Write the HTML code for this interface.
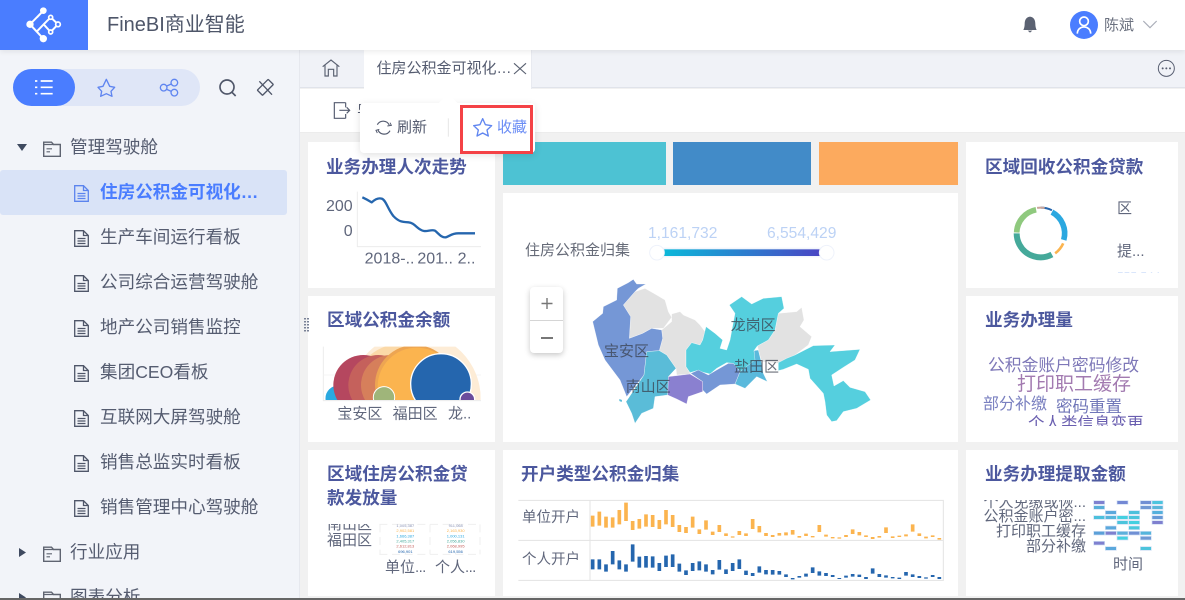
<!DOCTYPE html>
<html lang="zh"><head><meta charset="utf-8"><title>FineBI商业智能</title>
<style>
*{box-sizing:border-box}
html,body{margin:0;padding:0;width:1185px;height:600px;overflow:hidden;background:#f1f1f1;font-family:"Liberation Sans","Noto Sans CJK SC",sans-serif;color:#555c70}
#root{position:relative;width:1185px;height:600px;overflow:hidden;background:#f1f1f1}
.a{position:absolute}
.t{position:absolute;white-space:nowrap;line-height:1}
.card{position:absolute;background:#fff}
.h{position:absolute;white-space:nowrap;line-height:24px;font-size:17.6px;font-weight:700;color:#4c589e}
.n{font-size:17.6px;color:#555c70}
svg{position:absolute;overflow:visible}
.clip{position:absolute;overflow:hidden}
</style></head><body><div id="root">
<svg width="0" height="0" style="position:absolute"><defs>
<symbol id="doc" viewBox="0 0 15 17"><path d="M.7.7H9.5L14.3 5.5V16.3H.7ZM9.5.7V5.5H14.3M3.5 8.5H11.5M3.5 11H11.5M3.5 13.5H11.5" fill="none" stroke="#4f5669" stroke-width="1.3"/></symbol>
<symbol id="fold" viewBox="0 0 18 16"><path d="M.7 15.3V1.2H8.5L10.5 3.5H17.3V15.3Z" fill="none" stroke="#5f6471" stroke-width="1.4"/><path d="M.7 3.5H10.5M3.5 7.8H9M3.5 10.8H7" fill="none" stroke="#5f6471" stroke-width="1.2"/></symbol>
</defs></svg>

<!-- content background -->
<div class="a" style="left:300px;top:50px;width:885px;height:38px;background:#f0f2f7;border-bottom:1px solid #e0e3ea"></div>
<div class="a" style="left:300px;top:89px;width:885px;height:44px;background:#fff;border-bottom:1px solid #ececec"></div>
<div class="a" style="left:364px;top:50px;width:168px;height:39px;background:#fff;border-right:1px solid #e8eaf0"></div>

<!-- sidebar -->
<div class="a" style="left:0;top:50px;width:300px;height:550px;background:#f2f4f9;border-right:1px solid #e6e8ee"></div>
<div class="a" style="left:13px;top:69px;width:187px;height:37px;border-radius:19px;background:#dfe6f7"></div>
<div class="a" style="left:13px;top:69px;width:62px;height:37px;border-radius:19px;background:#4a7dff"></div>
<svg style="left:0;top:0" width="300" height="200" viewBox="0 0 900 600">
 <path d="M122 243H158M122 262H158M122 281H158" stroke="#fff" stroke-width="5" fill="none"/>
 <path d="M105 243H112M105 262H112M105 281H112" stroke="#fff" stroke-width="5" fill="none"/>
 <path d="M319 238L329 259L344 262L333 274L336 289L319 281L302 289L305 274L294 262L309 259Z" fill="none" stroke="#5f85f0" stroke-width="4" stroke-linejoin="round"/>
 <g fill="none" stroke="#5f85f0" stroke-width="4"><circle cx="523" cy="248" r="10"/><circle cx="523" cy="278" r="10"/><circle cx="491" cy="263" r="10"/><path d="M500 258L514 252M500 268L514 274"/></g>
 <g fill="none" stroke="#4f5669" stroke-width="5"><circle cx="681" cy="261" r="21"/><path d="M696 277L707 288"/></g>
 <g fill="none" stroke="#4f5669" stroke-width="4"><rect x="773" y="251" width="46" height="22" rx="2" transform="rotate(-45 796 262)"/><path d="M778 244L816 284"/></g>
</svg>
<div class="a" style="left:0;top:170px;width:287px;height:45px;border-radius:3px;background:#d9e3f7"></div>

<svg style="left:17px;top:144px" width="10" height="7" viewBox="0 0 10 7"><path d="M0 0H10L5 7Z" fill="#3f4a60"/></svg>
<svg style="left:19px;top:548px" width="7" height="9" viewBox="0 0 7 9"><path d="M0 0L7 4.5L0 9Z" fill="#3f4a60"/></svg>
<svg style="left:19px;top:593px" width="7" height="9" viewBox="0 0 7 9"><path d="M0 0L7 4.5L0 9Z" fill="#3f4a60"/></svg>
<svg style="left:43px;top:141px" width="18" height="16"><use href="#fold"/></svg>
<svg style="left:43px;top:546px" width="18" height="16"><use href="#fold"/></svg>
<svg style="left:43px;top:591px" width="18" height="16"><use href="#fold"/></svg>
<div class="t n" style="left:70px;top:138.5px">管理驾驶舱</div>
<div class="t n" style="left:70px;top:543.5px">行业应用</div>
<div class="t n" style="left:70px;top:588.5px">图表分析</div>

<svg style="left:74px;top:185px" width="15" height="17" viewBox="0 0 15 17"><path d="M.7.7H9.5L14.3 5.5V16.3H.7ZM9.5.7V5.5H14.3M3.5 8.5H11.5M3.5 11H11.5M3.5 13.5H11.5" fill="none" stroke="#5b84ee" stroke-width="1.3"/></svg>
<svg style="left:74px;top:230px" width="15" height="17"><use href="#doc"/></svg>
<svg style="left:74px;top:275px" width="15" height="17"><use href="#doc"/></svg>
<svg style="left:74px;top:320px" width="15" height="17"><use href="#doc"/></svg>
<svg style="left:74px;top:365px" width="15" height="17"><use href="#doc"/></svg>
<svg style="left:74px;top:410px" width="15" height="17"><use href="#doc"/></svg>
<svg style="left:74px;top:455px" width="15" height="17"><use href="#doc"/></svg>
<svg style="left:74px;top:500px" width="15" height="17"><use href="#doc"/></svg>
<div class="t n" style="left:100px;top:183.5px;font-weight:700;color:#4a7dff">住房公积金可视化…</div>
<div class="t n" style="left:100px;top:228.5px">生产车间运行看板</div>
<div class="t n" style="left:100px;top:273.5px">公司综合运营驾驶舱</div>
<div class="t n" style="left:100px;top:318.5px">地产公司销售监控</div>
<div class="t n" style="left:100px;top:363.5px">集团CEO看板</div>
<div class="t n" style="left:100px;top:408.5px">互联网大屏驾驶舱</div>
<div class="t n" style="left:100px;top:453.5px">销售总监实时看板</div>
<div class="t n" style="left:100px;top:498.5px">销售管理中心驾驶舱</div>

<!-- header -->
<div class="a" style="left:0;top:0;width:1185px;height:50px;background:#fff;box-shadow:0 2px 5px rgba(0,0,0,.07)"></div>
<div class="a" style="left:0;top:0;width:88px;height:50px;background:#4a7dff"></div>
<svg style="left:0;top:0" width="88" height="50" viewBox="0 0 264 150">
 <g stroke="#fff" stroke-width="6" fill="none"><path d="M130 32L90 73L130 116M110 95L131 73L152 96L174 73L152 52L131 73M130 32L111 52"/></g>
 <g fill="#fff"><circle cx="130" cy="32" r="10"/><circle cx="90" cy="73" r="11"/><circle cx="130" cy="116" r="11"/></g>
 <g fill="#4a7dff" stroke="#fff" stroke-width="5"><circle cx="152" cy="52" r="6"/><circle cx="174" cy="73" r="7"/><circle cx="152" cy="96" r="6"/></g>
</svg>
<div class="t" style="left:107px;top:15px;font-size:20px;color:#4e5669">FineBI商业智能</div>
<svg style="left:985px;top:0" width="200" height="90" viewBox="0 0 600 270">
 <path d="M135 50C121 52 119 64 119 72C119 80 117 86 115 90H155C153 86 151 80 151 72C151 64 149 52 135 50Z" fill="#5b6272"/><path d="M128 92H142L135 98Z" fill="#5b6272"/>
 <circle cx="297" cy="75" r="42" fill="#4a7dff"/>
 <circle cx="297" cy="64" r="13" fill="none" stroke="#fff" stroke-width="5"/>
 <path d="M277 101C277 74 317 74 317 101" fill="none" stroke="#fff" stroke-width="5"/>
 <path d="M475 63L495 83L515 63" fill="none" stroke="#a9adb8" stroke-width="3.5"/>
 <circle cx="544" cy="205" r="24" fill="none" stroke="#565d70" stroke-width="3"/>
 <g fill="#565d70"><circle cx="533" cy="205" r="3"/><circle cx="544" cy="205" r="3"/><circle cx="555" cy="205" r="3"/></g>
</svg>
<div class="t" style="left:1104px;top:18px;font-size:15px;color:#6c7280">陈斌</div>

<!-- tab bar -->
<svg style="left:300px;top:50px" width="300" height="90" viewBox="0 0 900 270">
 <path d="M68 50L93 30L118 50M75 45V78H85V58H101V78H111V45" fill="none" stroke="#5b6272" stroke-width="3.5"/>
 <path d="M642 40L678 72M678 40L642 72" stroke="#5b6272" stroke-width="3.5" fill="none"/>
 <path d="M137 158H103V205H137M137 158L137 172M137 192V205M118 181H148M140 172L149 181L140 190" fill="none" stroke="#555c70" stroke-width="3.5"/>
</svg>
<div class="t" style="left:376.5px;top:61px;font-size:15px;color:#555c70">住房公积金可视化…</div>
<div class="t" style="left:357px;top:104px;font-size:15px;color:#555c70">导</div>

<!-- cards -->
<div class="card" style="left:308px;top:142px;width:187px;height:146px"></div>
<div class="card" style="left:308px;top:296px;width:187px;height:146px"></div>
<div class="card" style="left:308px;top:450px;width:187px;height:146px"></div>
<div class="card" style="left:503px;top:142px;width:163px;height:43px;background:#4dc2d3"></div>
<div class="card" style="left:673px;top:142px;width:138px;height:43px;background:#428bc8"></div>
<div class="card" style="left:819px;top:142px;width:139px;height:43px;background:#fcaa5e"></div>
<div class="card" style="left:503px;top:193px;width:455px;height:249px"></div>
<div class="card" style="left:503px;top:450px;width:455px;height:146px"></div>
<div class="card" style="left:966px;top:142px;width:212px;height:146px"></div>
<div class="card" style="left:966px;top:296px;width:212px;height:146px"></div>
<div class="card" style="left:966px;top:450px;width:212px;height:146px"></div>

<div class="h" style="left:326px;top:155px">业务办理人次走势</div>
<div class="h" style="left:327px;top:308px">区域公积金余额</div>
<div class="h" style="left:327px;top:462px">区域住房公积金贷</div>
<div class="h" style="left:327px;top:486px">款发放量</div>
<div class="h" style="left:521px;top:462px">开户类型公积金归集</div>
<div class="h" style="left:985px;top:155px">区域回收公积金贷款</div>
<div class="h" style="left:985px;top:308px">业务办理量</div>
<div class="h" style="left:985px;top:462px">业务办理提取金额</div>

<!-- drag handle -->
<svg style="left:304px;top:318px" width="5" height="15"><path d="M1 0V15M4 0V15" stroke="#7a8296" stroke-width="2" stroke-dasharray="1.5 1.5"/></svg>

<!-- line + bubble -->
<svg style="left:300px;top:140px" width="200" height="310" viewBox="0 0 600 930">
 <path d="M172 155V320H543" fill="none" stroke="#ececec" stroke-width="3"/>
 <path d="M187 172Q200 178 215 187Q232 172 245 176C258 180 262 205 280 228C295 244 305 246 325 247C345 248 352 270 372 273C385 274 395 268 405 272C420 285 425 293 437 292C450 288 455 280 475 280L525 280" fill="none" stroke="#2566ae" stroke-width="7" stroke-linejoin="round"/>
 <clipPath id="bc"><rect x="70" y="620" width="472" height="160"/></clipPath>
 <path d="M70 620V782H543" fill="none" stroke="#ececec" stroke-width="3"/>
 <path d="M70 705H543" stroke="#f2f2f2" stroke-width="2"/>
 <g clip-path="url(#bc)">
  <circle cx="345" cy="775" r="197" fill="#fdecd6"/>
  <circle cx="310" cy="770" r="160" fill="#fbd9a8"/>
  <circle cx="115" cy="775" r="40" fill="#2aa9e0" stroke="#fff" stroke-width="3"/>
  <circle cx="190" cy="735" r="90" fill="#b5475f"/>
  <circle cx="235" cy="735" r="90" fill="#c5615c"/>
  <circle cx="273" cy="735" r="90" fill="#d67f5b"/>
  <circle cx="345" cy="735" r="120" fill="#eda552"/>
  <circle cx="350" cy="740" r="117" fill="#fbb44f"/>
  <circle cx="252" cy="772" r="32" fill="#9fb57a" stroke="#fff" stroke-width="3"/>
  <circle cx="423" cy="732" r="91" fill="#2566ae" stroke="#fff" stroke-width="4"/>
  <circle cx="502" cy="778" r="22" fill="#6a4c9c" stroke="#fff" stroke-width="4"/>
 </g>
 <g font-family="Liberation Sans,Noto Sans CJK SC,sans-serif" font-size="48" fill="#60677c">
  <text x="158" y="213" text-anchor="end">200</text>
  <text x="158" y="288" text-anchor="end">0</text>
  <text x="194" y="371">2018-..</text>
  <text x="352" y="371">201..</text>
  <text x="473" y="371">2..</text>
  <text x="112" y="836" font-size="45">宝安区</text>
  <text x="278" y="836" font-size="45">福田区</text>
  <text x="444" y="836" font-size="45">龙..</text>
 </g>
</svg>

<!-- map -->
<div class="t" style="left:525px;top:243px;font-size:15px;color:#666b78">住房公积金归集</div>
<div class="t" style="left:648px;top:226px;font-size:15.6px;color:#bcd2f5">1,161,732</div>
<div class="t" style="left:767px;top:226px;font-size:15.6px;color:#bcd2f5">6,554,429</div>
<svg style="left:500px;top:200px" width="460" height="240" viewBox="0 0 1380 720">
 <defs><linearGradient id="gr"><stop offset="0" stop-color="#0bb8d9"/><stop offset="1" stop-color="#4a46c4"/></linearGradient></defs>
 <rect x="450" y="143" width="550" height="29" rx="14" fill="#f2f5fc"/>
 <rect x="490" y="148" width="470" height="20" fill="url(#gr)"/>
 <circle cx="471" cy="158" r="22" fill="#fff" stroke="#eef2fb" stroke-width="3"/>
 <circle cx="980" cy="158" r="22" fill="#fff" stroke="#eef2fb" stroke-width="3"/>
 <g stroke="#fff" stroke-width="1" stroke-linejoin="round">
 <path fill="#e2e2e2" d="M370 315L405 275L435 265L470 285L495 300L505 335L515 352L490 385L455 385L428 400L388 415L392 350Z"/>
 <path fill="#e2e2e2" d="M515 342L540 335L550 345L585 360L600 375L615 395L608 420L600 435L575 428L558 450L558 500L572 522L530 525L528 505L500 465L478 452L488 415L485 390L515 365Z"/>
 <path fill="#e2e2e2" d="M835 340L890 335L905 322L912 360L900 380L935 410L925 435L885 465L860 478L840 490L785 485L772 438L805 420L825 390Z"/>
 <path fill="#7597d6" d="M400 238L410 252L438 252L415 265L405 275L370 315L392 350L388 415L428 400L455 385L485 390L488 415L478 452L440 455L432 525L380 590L360 540L315 480L295 435L278 365L308 340L310 320L350 300L352 265L385 248Z"/>
 <path fill="#55cfde" d="M558 450L575 428L600 435L608 420L618 380L645 400L668 420L660 445L680 450L690 420L705 340L688 315L725 290L755 312L790 295L845 290L852 325L835 340L825 390L805 420L772 438L762 452L770 495L720 515L700 490L680 488L650 505L630 522L590 512L570 518L558 500Z"/>
 <path fill="#55cfde" d="M835 488L860 475L885 465L940 437L1005 435L990 455L1080 448L1065 480L1030 502L995 525L1002 558L1030 542L1050 562L1095 575L1112 600L1070 625L1030 635L1010 662L995 665L980 645L975 605L970 580L930 535L925 508L890 492L850 508L835 512Z"/>
 <path fill="#5ab9dc" d="M762 452L775 450L785 490L790 520L802 545L770 530L735 565L705 552L720 515L765 480Z"/>
 <path fill="#7597d6" d="M572 520L595 510L625 525L650 510L685 490L700 490L720 515L705 552L660 555L620 582L608 570L608 545Z"/>
 <path fill="#8a80d0" d="M505 530L570 522L608 545L608 575L565 590L560 612L530 597L503 585Z"/>
 <path fill="#5abcd8" d="M440 455L478 452L500 465L528 505L505 530L503 585L465 590L460 625L425 640L405 670L395 640L378 605L385 595L432 525Z"/>
 </g>
 <path fill="#5abcd8" d="M358 597L366 600L365 606L358 603Z"/>
 <g font-family="Liberation Sans,Noto Sans CJK SC,sans-serif" font-size="45" fill="#3a404e" fill-opacity=".75">
  <text x="312" y="468">宝安区</text><text x="377" y="574">南山区</text><text x="692" y="390">龙岗区</text><text x="702" y="515">盐田区</text>
 </g>
</svg>
<div class="a" style="left:530px;top:287px;width:33px;height:66px;background:#fff;border-radius:4px;box-shadow:0 2px 6px rgba(0,0,0,.22)"></div>
<div class="a" style="left:530px;top:320px;width:33px;height:1px;background:#d5d5d5"></div>
<svg style="left:530px;top:287px" width="33" height="66"><path d="M11.5 16.5H22.5M17 11V22" stroke="#777" stroke-width="1.4"/><path d="M11 51H23" stroke="#777" stroke-width="2"/></svg>

<!-- donut -->
<svg style="left:960px;top:140px" width="225" height="150" viewBox="0 0 675 450" fill="none">
 <circle cx="242" cy="280" r="77" pathLength="360" stroke="#2566ae" stroke-width="6" stroke-dasharray="26 360" transform="rotate(-90 242 280)"/>
 <circle cx="242" cy="280" r="72" pathLength="360" stroke="#2ba8e0" stroke-width="17" stroke-dasharray="78 360" transform="rotate(-62 242 280)"/>
 <circle cx="242" cy="280" r="74" pathLength="360" stroke="#fbb44f" stroke-width="8" stroke-dasharray="30 360" transform="rotate(24 242 280)"/>
 <circle cx="242" cy="280" r="72" pathLength="360" stroke="#45a99a" stroke-width="18" stroke-dasharray="118 360" transform="rotate(62 242 280)"/>
 <circle cx="242" cy="280" r="72" pathLength="360" stroke="#8fc97e" stroke-width="17" stroke-dasharray="77 360" transform="rotate(182 242 280)"/>
 <circle cx="242" cy="280" r="77" pathLength="360" stroke="#c9a59a" stroke-width="6" stroke-dasharray="17 360" transform="rotate(262 242 280)"/>
</svg>
<div class="t" style="left:1117px;top:201px;font-size:15px;color:#60677c">区</div>
<div class="t" style="left:1117px;top:244px;font-size:15px;color:#60677c">提...</div>
<div class="clip" style="left:1117px;top:271px;width:50px;height:2px"><div class="t" style="left:0;top:0;font-size:12px;color:#b5cdf7">555,544</div></div>

<!-- word cloud -->
<div class="clip" style="left:966px;top:350px;width:212px;height:76px">
 <div class="t" style="left:22px;top:8px;font-size:16.8px;color:#7e78b8">公积金账户密码修改</div>
 <div class="t" style="left:51px;top:25px;font-size:19px;color:#a27ab0">打印职工缓存</div>
 <div class="t" style="left:17px;top:47px;font-size:16px;color:#7a80c0">部分补缴</div>
 <div class="t" style="left:90px;top:49px;font-size:16.5px;color:#7076b8">密码重置</div>
 <div class="t" style="left:62px;top:66px;font-size:16.5px;color:#6a5fb0">个人类信息变更</div>
</div>

<!-- bottom left -->
<div class="clip" style="left:327px;top:524px;width:50px;height:26px">
 <div class="t" style="left:0;top:-7px;font-size:15px;color:#60677c">南山区</div>
 <div class="t" style="left:0;top:9px;font-size:15px;color:#60677c">福田区</div>
</div>
<svg style="left:300px;top:445px" width="200" height="155" viewBox="0 0 600 465">
 <g stroke="#efefef" stroke-width="3" stroke-dasharray="24 14" fill="none"><path d="M238 238H542M238 328H542M240 238V328M540 238V328M390 238V328"/></g>
 <g font-family="Liberation Sans,sans-serif" font-size="12" text-anchor="middle">
  <text x="316" y="246" fill="#8a93b5">1,005,387</text><text x="467" y="246" fill="#8a93b5">911,068</text>
  <text x="316" y="261" fill="#fbb44f">2,902,581</text><text x="467" y="261" fill="#fbb44f">2,163,930</text>
  <text x="316" y="278" fill="#2ba8e0">1,666,387</text><text x="467" y="278" fill="#2ba8e0">1,000,131</text>
  <text x="316" y="293" fill="#45a99a">2,405,317</text><text x="467" y="293" fill="#45a99a">2,056,830</text>
  <text x="316" y="308" fill="#c5615c">2,612,813</text><text x="467" y="308" fill="#c5615c">2,068,995</text>
  <text x="316" y="324" fill="#2566ae">696,901</text><text x="467" y="324" fill="#2566ae">619,556</text>
 </g>
</svg>
<div class="t" style="left:385px;top:560px;font-size:15px;color:#60677c">单位<span style="letter-spacing:-.6px">...</span></div>
<div class="t" style="left:435px;top:560px;font-size:15px;color:#60677c">个人<span style="letter-spacing:-.6px">...</span></div>

<!-- bars -->
<div class="t" style="left:522px;top:511px;font-size:14.5px;color:#60677c">单位开户</div>
<div class="t" style="left:522px;top:553px;font-size:14.5px;color:#60677c">个人开户</div>
<svg style="left:300px;top:445px" width="680" height="155" viewBox="0 0 2040 465" fill="none">
 <path d="M655 166H1930V406H655M655 286H1930M870 166V406" stroke="#e3e3e3" stroke-width="3"/>
 <path stroke="#fbb44f" stroke-width="11" d="M878 212V245M898 200V242M918 215V248M938 217V248M958 195V238M978 173V228M998 228V255M1018 222V251M1038 208V245M1058 210V246M1078 225V252M1098 195V238M1118 210V246M1138 240V261M1158 246V264M1178 215V248M1198 253V267M1218 226V254M1238 260V270M1258 240V261M1278 265V273M1298 274V278M1318 258V270M1338 265V273M1358 222V252M1378 243V262M1398 264V273M1418 270V276M1438 264V272M1458 262V271M1478 255V269M1498 273V278M1518 266V273M1538 273V277M1558 240V261M1578 269V275M1598 276V280M1618 277V281M1638 270V276M1658 253V267M1678 261V271M1698 271V276M1718 276V282M1738 273V278M1758 247V264M1778 274V279M1798 272V276M1818 268V274M1838 238V260M1858 265V273M1878 275V280M1898 271V276M1918 279V284"/>
 <path stroke="#2566ae" stroke-width="11" d="M878 343V373M898 343V373M918 358V380M938 318V358M958 346V373M978 358V380M998 298V350M1018 335V368M1038 333V368M1058 334V368M1078 354V378M1098 332V366M1118 328V366M1138 356V380M1158 376V390M1178 354V378M1198 349V376M1218 358V380M1238 375V388M1258 345V374M1278 373V387M1298 354V378M1318 343V372M1338 377V390M1358 384V393M1378 364V383M1398 375V388M1418 375V389M1438 378V389M1458 388V396M1478 399V403M1498 393V398M1518 386V395M1538 367V384M1558 379V392M1578 384V393M1598 390V396M1618 399V402M1638 392V398M1658 387V395M1678 389V396M1698 396V402M1718 370V386M1738 387V396M1758 391V398M1778 396V400M1798 398V402M1818 381V392M1838 388V396M1858 393V399M1878 397V401M1898 390V396M1918 396V402"/>
</svg>

<!-- heatmap -->
<div class="clip" style="left:966px;top:500px;width:122px;height:56px">
 <div class="t" style="right:2px;top:-5px;font-size:15px;color:#60677c">个人免缴或恢...</div>
 <div class="t" style="right:2px;top:9px;font-size:15px;color:#60677c">公积金账户密...</div>
 <div class="t" style="right:2px;top:24px;font-size:15px;color:#60677c">打印职工缓存</div>
 <div class="t" style="right:2px;top:39px;font-size:15px;color:#60677c">部分补缴</div>
</div>
<svg style="left:960px;top:445px" width="225" height="155" viewBox="0 0 675 465">
 <g stroke="#cfe0f5" stroke-width="2">
  <rect x="401" y="167" width="33" height="11" fill="#7f80cf"/><rect x="471" y="167" width="33" height="11" fill="#7388d4"/><rect x="541" y="167" width="33" height="11" fill="#6f8fd4"/><rect x="576" y="167" width="33" height="11" fill="#4cc4de"/>
  <rect x="401" y="182" width="33" height="11" fill="#58aed8"/><rect x="541" y="182" width="33" height="11" fill="#6f98d4"/><rect x="576" y="182" width="33" height="11" fill="#5ab5da"/>
  <rect x="436" y="197" width="33" height="11" fill="#5ba8dc"/><rect x="506" y="197" width="33" height="11" fill="#4dc0dc"/><rect x="576" y="197" width="33" height="11" fill="#55b0dc"/>
  <rect x="401" y="212" width="33" height="11" fill="#4cc0dc"/><rect x="436" y="212" width="33" height="11" fill="#55b5dc"/><rect x="471" y="212" width="33" height="11" fill="#44d0e0"/><rect x="506" y="212" width="33" height="11" fill="#4cc4dc"/><rect x="576" y="212" width="33" height="11" fill="#6798d6"/>
  <rect x="471" y="227" width="33" height="11" fill="#4cc4dc"/><rect x="506" y="227" width="33" height="11" fill="#44d0e0"/><rect x="576" y="227" width="33" height="11" fill="#7f80cf"/>
  <rect x="436" y="243" width="33" height="11" fill="#5ba8dc"/><rect x="506" y="243" width="33" height="11" fill="#4cc8dc"/>
  <rect x="401" y="259" width="33" height="11" fill="#5ba0d8"/><rect x="436" y="259" width="33" height="11" fill="#7f80cf"/><rect x="471" y="259" width="33" height="11" fill="#5cb0dc"/><rect x="506" y="259" width="33" height="11" fill="#7090d4"/><rect x="541" y="259" width="33" height="11" fill="#55b5dc"/>
  <rect x="471" y="274" width="33" height="11" fill="#44d0e0"/><rect x="541" y="274" width="33" height="11" fill="#6f98d4"/>
  <rect x="401" y="289" width="33" height="11" fill="#7f80cf"/>
  <rect x="436" y="305" width="33" height="11" fill="#5ba8dc"/><rect x="541" y="305" width="33" height="11" fill="#4cc4dc"/>
 </g>
</svg>
<div class="t" style="left:1113px;top:557px;font-size:15px;color:#60677c">时间</div>

<!-- popup -->
<div class="a" style="left:360px;top:103px;width:175px;height:50px;background:#fff;border-radius:4px;box-shadow:0 2px 8px rgba(0,0,0,.12)"></div>
<svg style="left:300px;top:50px" width="300" height="110" viewBox="0 0 900 330" fill="none">
 <path d="M415 160L444 130L474 160Z" fill="#fff"/>
 <path d="M445 205V260" stroke="#e6e6e6" stroke-width="3"/>
 <path d="M232 224A20 20 0 0 1 268 226M270 242A20 20 0 0 1 234 240" stroke="#555c70" stroke-width="3.5"/>
 <path d="M262 228L274 226L270 218M238 238L228 241L232 249" stroke="#555c70" stroke-width="3"/>
 <path d="M548 206L556 224L575 227L561 240L565 258L548 249L531 258L535 240L521 227L540 224Z" stroke="#5f85f0" stroke-width="4" stroke-linejoin="round"/>
</svg>
<div class="t" style="left:397px;top:120px;font-size:15px;color:#555c70">刷新</div>
<div class="t" style="left:497px;top:120px;font-size:15px;color:#6b8df5">收藏</div>
<div class="a" style="left:460px;top:105px;width:73px;height:49px;border:3px solid #f44246"></div>

<div class="a" style="left:0;top:598px;width:1185px;height:2px;background:#666"></div>
</div></body></html>
